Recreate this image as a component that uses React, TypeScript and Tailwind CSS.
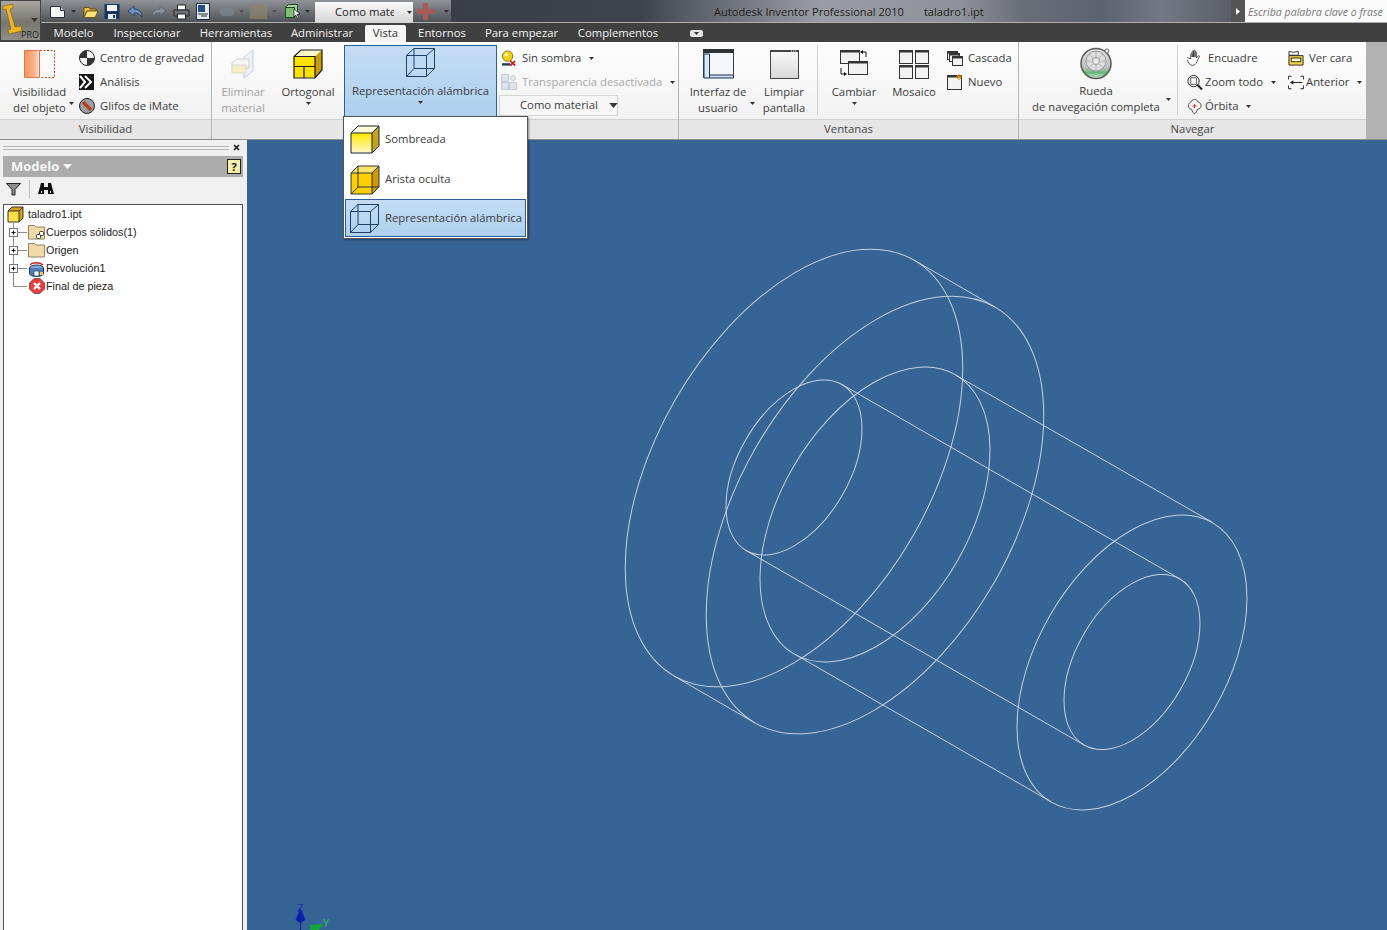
import type { ReactNode } from 'react';

const Caret = ({ className = '' }: { className?: string }) => (
  <svg width="5" height="3" viewBox="0 0 5 3" className={`shrink-0 ${className}`}>
    <path d="M0 0h5L2.5 3z" fill="#333" />
  </svg>
);

// ---- quick access icons
const NewIcon = () => (
  <svg width="17" height="16" viewBox="0 0 17 16">
    <path d="M1.500 2.500h10l4 4v7h-14z" fill="#f4f6f8" stroke="#23303c" />
    <path d="M11.500 2.500v4h4" fill="#c8d0d8" stroke="#23303c" />
  </svg>
);
const OpenIcon = () => (
  <svg width="16" height="16" viewBox="0 0 16 16">
    <path d="M1 3.500h5l1 1.500h6v2H4l-3 6z" fill="#f0c040" stroke="#5a4208" strokeWidth="0.8" />
    <path d="M4 7h11l-3 6.500H1z" fill="#fbe27a" stroke="#5a4208" strokeWidth="0.8" />
  </svg>
);
const SaveIcon = () => (
  <svg width="16" height="17" viewBox="0 0 16 17">
    <path d="M.5 1h15v15H.5z" fill="#16365e" />
    <path d="M3 2h10v6H3z" fill="#f2f5f8" />
    <path d="M4 11h8v5H4z" fill="#e6ecf2" />
    <path d="M9 12h2v3H9z" fill="#16365e" />
  </svg>
);
const UndoIcon = ({ dim = false }: { dim?: boolean }) => (
  <svg width="17" height="14" viewBox="0 0 17 14" className={dim ? 'opacity-30 -scale-x-100' : ''}>
    <path d="M7 1L1 6l6 5V8c3 0 6 .5 8 4 .3-5-3-8-8-8z" fill={dim ? '#c4ccd6' : '#6f93bd'} stroke="#20406a" strokeWidth="0.9" />
  </svg>
);
const PrintIcon = () => (
  <svg width="17" height="16" viewBox="0 0 17 16">
    <path d="M4.500 1h8v5h-8z" fill="#fff" stroke="#222" />
    <path d="M1 6h15v6H1z" fill="#6d7276" stroke="#222" />
    <path d="M4.500 10h8v5h-8z" fill="#fff" stroke="#222" />
  </svg>
);
const DocIcon = () => (
  <svg width="14" height="17" viewBox="0 0 14 17">
    <path d="M.5.500h13v16H.5z" fill="#e8eaec" stroke="#1b2d40" />
    <path d="M2 2h7v7H2z" fill="#24507f" />
    <path d="M2 11h10M5 13h6" stroke="#1b2d40" />
  </svg>
);
const CursorBoxIcon = () => (
  <svg width="18" height="19" viewBox="0 0 18 19">
    <path d="M1.500 5.500l3-3h9v10h-12z" fill="#a8d49a" stroke="#24432a" />
    <path d="M1.500 5.500h9v10h-9z" fill="#7fbf6f" stroke="#24432a" />
    <path d="M10 7l6 5-3 .3 2 3.500-1.500 .7-1.800-3.500L10 15z" fill="#fff" stroke="#111" strokeWidth="0.7" />
  </svg>
);
const RedPlusIcon = () => (
  <svg width="17" height="17" viewBox="0 0 17 17">
    <path d="M6 0h5v6h6v5h-6v6H6v-6H0V6h6z" fill="#a85a58" />
  </svg>
);

// ---- ribbon icons
const VisibilityIcon = () => (
  <svg width="31" height="29" viewBox="0 0 31 29">
    <defs>
      <linearGradient id="vis" x1="0" x2="1" y1="0" y2="0">
        <stop offset="0" stopColor="#f3955f" />
        <stop offset="0.65" stopColor="#f9b48c" />
        <stop offset="1" stopColor="#fde6d8" />
      </linearGradient>
    </defs>
    <path d="M.5.500h15v27H.5z" fill="url(#vis)" stroke="#d9764a" />
    <path d="M16 .5h14.500v27H16" fill="none" stroke="#b3552c" strokeDasharray="2 1.500" />
  </svg>
);
const GravityIcon = () => (
  <svg width="16" height="16" viewBox="0 0 16 16">
    <circle cx="8" cy="8" r="7.500" fill="#f4f4f4" stroke="#222" />
    <path d="M8 8V.5A7.500 7.500 0 0 0 .5 8zM8 8v7.500A7.500 7.500 0 0 0 15.500 8z" fill="#333" />
  </svg>
);
const AnalysisIcon = () => (
  <svg width="16" height="16" viewBox="0 0 16 16">
    <path d="M0 0h15v16H0z" fill="#151515" />
    <path d="M1 2l5 6-5 6M6 2l6 6-6 6" fill="none" stroke="#fff" strokeWidth="2" />
  </svg>
);
const ImateIcon = () => (
  <svg width="16" height="16" viewBox="0 0 16 16">
    <circle cx="8" cy="8" r="7.500" fill="#9a9fa5" stroke="#222" />
    <path d="M4 4l8 8" stroke="#b8401c" strokeWidth="3.500" />
  </svg>
);
const RemoveMaterialIcon = () => (
  <svg width="24" height="30" viewBox="0 0 24 30">
    <path d="M13 8l9-7v21l-9 7z" fill="#eef2f8" stroke="#c4d0e2" />
    <path d="M1 14l5-4h12v9H1z" fill="#f5f5f5" stroke="#cfcfcf" />
    <path d="M1 16h14v8H1z" fill="#f6efc4" stroke="#d8d8d8" />
  </svg>
);
const OrthoIcon = () => (
  <svg width="30" height="30" viewBox="0 0 30 30">
    <path d="M1 7.500l7-6.500h21v20l-7 7.500z" fill="#c69a08" />
    <path d="M1 7.500l7-6.500h21l-7 6.500z" fill="#fff7cc" />
    <path d="M1 7.500h21v21H1z" fill="#ffe100" />
    <path d="M1 7.500l7-6.500h21v20l-7 8H1zM1 7.500h21v21M11 28.500v-11h11M1 17.500h10" fill="none" stroke="#1d1d1d" strokeWidth="1.200" />
  </svg>
);
const WireIcon = ({ color = '#1c3f66' }: { color?: string }) => (
  <svg width="29" height="29" viewBox="0 0 29 29" className="shrink-0">
    <path d="M.5 7.500h20v21H.5zM8 .5h20.500v20H8zM.5 7.500L8 .5M20.500 7.500L28.500 .5M.5 28.500L8 20.500M20.500 28.500l8-8" fill="none" stroke={color} />
  </svg>
);
const ShadedIcon = () => (
  <svg width="30" height="29" viewBox="0 0 30 29" className="shrink-0">
    <defs>
      <linearGradient id="shade" x1="0" x2="0" y1="0" y2="1">
        <stop offset="0" stopColor="#ffe600" />
        <stop offset="1" stopColor="#fff9c8" />
      </linearGradient>
    </defs>
    <path d="M1 8L8 1h21v20l-7 7z" fill="#c8a218" />
    <path d="M1 8L8 1h21l-7 7z" fill="#fffbd8" />
    <path d="M1 8h21v20H1z" fill="url(#shade)" />
    <path d="M1 8L8 1h21v20l-7 7H1zM1 8h21v20M22 8l7-7" fill="none" stroke="#13263a" />
  </svg>
);
const HiddenEdgeIcon = () => (
  <svg width="30" height="31" viewBox="0 0 30 31" className="shrink-0">
    <path d="M1 9l7-7h21v21l-7 7z" fill="#d09a00" />
    <path d="M1 9l7-7h21l-7 7z" fill="#ffe36a" />
    <path d="M1 9h21v21H1z" fill="#ffcf00" />
    <path d="M1 9l7-7h21v21l-7 7H1zM1 9h21v21M22 9l7-7M8 2v21h21M8 23l-7 7" fill="none" stroke="#13263a" strokeWidth="0.9" />
  </svg>
);
const NoShadowIcon = () => (
  <svg width="17" height="17" viewBox="0 0 17 17">
    <circle cx="7" cy="6" r="5.500" fill="#f3d21c" stroke="#8a7408" />
    <circle cx="5.500" cy="4.500" r="1.800" fill="#fff6b0" />
    <path d="M1 13.500h9v2.500H1z" fill="#23364e" />
    <path d="M10 11l5 5M15 11l-5 5" stroke="#c81e1e" strokeWidth="1.800" />
  </svg>
);
const TransparencyIcon = () => (
  <svg width="16" height="16" viewBox="0 0 16 16">
    <path d="M.5.500h7v7h-7zM.5 8.500h7v7h-7zM8.500 8.500h7v7h-7z" fill="#dde3ea" stroke="#c3ccd6" />
    <circle cx="12" cy="4" r="2.500" fill="#e8ecf0" stroke="#c3ccd6" />
  </svg>
);
const UiIcon = () => (
  <svg width="31" height="30" viewBox="0 0 31 30">
    <path d="M.5.500h30v28H.5z" fill="#f4f6f8" stroke="#3a3f46" />
    <path d="M0 0h31v4H0z" fill="#2f3338" />
    <path d="M1 5h5.500v24H1z" fill="#dce8f4" stroke="#16365e" />
    <path d="M6.500 26h24v3h-24z" fill="#d0dded" stroke="#16365e" />
  </svg>
);
const CleanIcon = () => (
  <svg width="29" height="29" viewBox="0 0 29 29">
    <defs>
      <linearGradient id="clean" x1="0" x2="0" y1="0" y2="1">
        <stop offset="0" stopColor="#fafafa" />
        <stop offset="1" stopColor="#d8d8d8" />
      </linearGradient>
    </defs>
    <path d="M.5.500h28v28H.5z" fill="url(#clean)" stroke="#444" />
    <path d="M0 0h29v2H0z" fill="#444" />
    <path d="M21 1h1M23 1h1M25 1h1" stroke="#fff" />
  </svg>
);
const Win = ({ x, y, w, h }: { x: number; y: number; w: number; h: number }) => (
  <g>
    <rect x={x + 0.5} y={y + 0.5} width={w} height={h} fill="#f2f2f2" stroke="#333" />
    <rect x={x} y={y} width={w + 1} height={2.5} fill="#333" />
  </g>
);
const SwitchIcon = () => (
  <svg width="31" height="30" viewBox="0 0 31 30">
    <Win x={1} y={1} w={19} h={13} />
    <Win x={9} y={12} w={19} h={13} />
    <path d="M27 8V3h-4" fill="none" stroke="#111" />
    <path d="M24 1l-3 2 3 2z" fill="#111" />
    <path d="M2 19v6h3" fill="none" stroke="#111" />
    <path d="M5 23l3 2-3 2z" fill="#111" />
  </svg>
);
const TileIcon = () => (
  <svg width="30" height="29" viewBox="0 0 30 29">
    <Win x={0} y={0} w={13} h={13} />
    <Win x={16} y={0} w={13} h={13} />
    <Win x={0} y={15} w={13} h={13} />
    <Win x={16} y={15} w={13} h={13} />
  </svg>
);
const CascadeIcon = () => (
  <svg width="16" height="15" viewBox="0 0 16 15">
    <Win x={0} y={0} w={10} h={8} />
    <Win x={2} y={2} w={10} h={8} />
    <Win x={5} y={5} w={10} h={9} />
  </svg>
);
const NewWinIcon = () => (
  <svg width="16" height="16" viewBox="0 0 16 16">
    <Win x={0} y={1} w={14} h={14} />
    <path d="M12 0v6M9 3h6M10 1l4 4M14 1l-4 4" stroke="#e98a16" />
  </svg>
);
const WheelIcon = () => (
  <svg width="32" height="33" viewBox="0 0 32 33">
    <defs>
      <linearGradient id="wheel" x1="0" x2="0" y1="0" y2="1">
        <stop offset="0" stopColor="#e4e4e4" />
        <stop offset="0.65" stopColor="#bdbdbd" />
        <stop offset="0.8" stopColor="#66b97c" />
        <stop offset="1" stopColor="#c9e6d0" />
      </linearGradient>
    </defs>
    <circle cx="16" cy="16.500" r="15" fill="url(#wheel)" stroke="#5a5a5a" strokeWidth="1.500" />
    <circle cx="16" cy="14" r="10" fill="#dcdcdc" stroke="#9a9a9a" />
    <path d="M16 4v20M6 14h20M9 7l14 14M23 7L9 21" stroke="#a8a8a8" strokeWidth="0.700" />
    <circle cx="16" cy="14" r="3.500" fill="#e8e8e8" stroke="#9a9a9a" />
    <circle cx="27" cy="4" r="2" fill="#fff" stroke="#666" />
  </svg>
);
const HandIcon = () => (
  <svg width="17" height="18" viewBox="0 0 17 18">
    <path d="M4 10V5c0-1.200 1.500-1.200 1.500 0v3-5.500c0-1.200 1.500-1.200 1.500 0V8V1.500c0-1.200 1.500-1.200 1.500 0V8V3c0-1.200 1.500-1.200 1.500 0v6l1.800-2.200c.8-.8 1.900 0 1.300 1l-2.800 5.500c-1 2.200-2.200 3.500-4.300 3.500-3 0-4-2-5-4l-1.700-3.300c-.5-1 .8-1.600 1.500-.8z" fill="#fff" stroke="#222" strokeWidth="0.800" />
  </svg>
);
const FaceIcon = () => (
  <svg width="17" height="16" viewBox="0 0 17 16">
    <path d="M1 1l5 1 5-1v4H1z" fill="none" stroke="#333" />
    <path d="M1 5.500h15v10H1z" fill="#f4d84a" stroke="#222" />
    <path d="M3.500 8h10v4h-10z" fill="#fff8c8" stroke="#222" />
  </svg>
);
const ZoomAllIcon = () => (
  <svg width="17" height="17" viewBox="0 0 17 17">
    <circle cx="7" cy="7" r="6" fill="#f2f2f2" stroke="#222" />
    <path d="M4 3.500h6v7H4z" fill="#fff" stroke="#333" strokeWidth="0.800" />
    <path d="M11 11l5 5" stroke="#222" strokeWidth="2.200" />
  </svg>
);
const PreviousIcon = () => (
  <svg width="18" height="15" viewBox="0 0 18 15">
    <path d="M.5 4V.5H4M14 .5h3.500V4M.5 11v3.500H4M14 14.500h3.500V11" fill="none" stroke="#111" />
    <path d="M3 7.500h13" stroke="#111" />
    <path d="M6 5v5L2.500 7.500z" fill="#111" />
  </svg>
);
const OrbitIcon = () => (
  <svg width="17" height="17" viewBox="0 0 17 17">
    <path d="M8 1c2 0 3 1 3.500 2.500C13.500 4 15 5.500 15 8c0 2-2 3-4 3.500C10.500 14 9 16 8 16s-2.500-2-3-4.500C3 11 1.500 10 1.500 8 1.500 5.500 3 4 4.500 3.500 5 2 6 1 8 1z" fill="none" stroke="#222" strokeWidth="0.800" />
    <path d="M6 8h4M8 6v4" stroke="#c81e1e" />
  </svg>
);

// ---- tree icons
const PartIcon = () => (
  <svg width="17" height="17" viewBox="0 0 17 17">
    <path d="M1 5l4-4h11v11l-4 4z" fill="#d8a010" />
    <path d="M1 5h11v11H1z" fill="#ffe04a" />
    <path d="M1 5l4-4h11v11l-4 4H1zM1 5h11v11M12 5l4-4" fill="none" stroke="#222" strokeWidth="0.900" />
  </svg>
);
const FolderIcon = ({ link = false }: { link?: boolean }) => (
  <svg width="17" height="16" viewBox="0 0 17 16">
    <path d="M.5 3V1.500h6L8 3h8.500v12H.5z" fill="#f2d9a8" stroke="#8f8468" />
    {link && (
      <g fill="#fff" stroke="#333">
        <rect x="11.500" y="7.500" width="4" height="4" rx="1" />
        <rect x="8.500" y="10.500" width="4" height="4" rx="1" />
      </g>
    )}
  </svg>
);
const RevolveIcon = () => (
  <svg width="17" height="17" viewBox="0 0 17 17">
    <path d="M2 5c2-3 10-3 13 0" fill="none" stroke="#c81e1e" strokeWidth="1.300" />
    <ellipse cx="8.500" cy="8" rx="7" ry="3" fill="#7fa6cf" stroke="#163a66" />
    <path d="M1.500 8v5.500c0 2 4 3 7 3s7-1 7-3V8" fill="#4f7fb2" stroke="#163a66" />
    <path d="M6 11h5v5H6z" fill="#fff" stroke="#163a66" strokeWidth="0.700" />
    <path d="M12 12h3v3h-3z" fill="#f1d14a" />
  </svg>
);
const EndIcon = () => (
  <svg width="16" height="16" viewBox="0 0 16 16">
    <path d="M5 .5h6L15.500 5v6L11 15.500H5L.5 11V5z" fill="#e43c3c" stroke="#7a5a5a" />
    <path d="M5 5l6 6M11 5l-6 6" stroke="#fff" strokeWidth="2.400" />
  </svg>
);

const SmallItem = ({ icon, label, caret, dim, gap = 'ml-[5px]' }: { icon: ReactNode; label: string; caret?: boolean; dim?: boolean; gap?: string }) => (
  <div className="flex h-[24px] items-center whitespace-nowrap">
    <span className="flex w-[16px] justify-center">{icon}</span>
    <span className={`${gap} ${dim ? 'text-[#a8a8a8]' : ''}`}>{label}</span>
    {caret && <Caret className="ml-[8px]" />}
  </div>
);

const LargeButton = ({ icon, lines, width, caret }: { icon: ReactNode; lines: string[]; width: string; caret?: boolean }) => (
  <div className={`${width} flex shrink-0 flex-col items-center pt-[4px]`}>
    <div className="flex h-[38px] items-center justify-center pb-[2px]">{icon}</div>
    {lines.map((line) => (
      <span key={line} className="whitespace-nowrap leading-[16px]">{line}</span>
    ))}
    {caret && <Caret className="mt-[2px]" />}
  </div>
);

const Panel = ({ width, label, children }: { width: string; label: string; children: ReactNode }) => (
  <section className={`${width} flex h-full shrink-0 flex-col border-r border-[#b4b4b4]`}>
    <div className="flex h-[77px]">{children}</div>
    <div className="flex h-[20px] items-center justify-center border-t border-[#cfcfcf] bg-[#e6e6e6] text-[#444]">{label}</div>
  </section>
);

const TreeRow = ({ kind, icon, label }: { kind: 'plus' | 'last'; icon: ReactNode; label: string }) => (
  <div className="flex h-[18px] items-center">
    <svg width="24" height="18" viewBox="0 0 24 18">
      <path d={kind === 'plus' ? 'M9.500 0v18M9.500 9.500H23' : 'M9.500 0v9.500H23'} stroke="#8a8a8a" fill="none" />
      {kind === 'plus' && (
        <>
          <rect x="5.500" y="5.500" width="8" height="8" fill="#fff" stroke="#777" />
          <path d="M7.500 9.500h4M9.500 7.500v4" stroke="#111" />
        </>
      )}
    </svg>
    <span className="flex w-[17px] justify-center">{icon}</span>
    <span className="ml-[1px]">{label}</span>
  </div>
);

const tabs = [
  { label: 'Modelo', w: 'w-[61px]' },
  { label: 'Inspeccionar', w: 'w-[86px]' },
  { label: 'Herramientas', w: 'w-[92px]' },
  { label: 'Administrar', w: 'w-[80px]' },
];
const tabsAfter = [
  { label: 'Entornos', w: 'w-[72px]' },
  { label: 'Para empezar', w: 'w-[87px]' },
  { label: 'Complementos', w: 'w-[106px]' },
];

const cyl = { a: 240, b: 137 };
const mid = { a: 161.3, b: 94.6 };
const hole = { a: 95.8, b: 55.7 };
const ellipses = [
  { cx: 794, cy: 468, ...cyl },
  { cx: 875, cy: 515, ...cyl },
  { cx: 875, cy: 514.5, ...mid },
  { cx: 794, cy: 467.5, ...hole },
  { cx: 1132, cy: 662.5, ...mid },
  { cx: 1132, cy: 662, ...hole },
];
const segments = [
  'M914 260L995 307',
  'M674 676L755 723',
  'M955.600 375L1212.600 522.500',
  'M794.400 654L1051.400 802',
  'M842 384.500L1180 579',
  'M746 550.500L1084 745',
];

export default function App() {
  return (
    <div className="relative flex h-[930px] w-[1387px] flex-col overflow-hidden bg-[#366495] font-['Open_Sans','Noto_Sans',sans-serif] text-[11.3px] text-[#3b3b3b]">
      {/* Title bar and tabs */}
      <header className="flex h-[42px] shrink-0 bg-[#404040]">
        <div className="h-[41px] w-[41px] shrink-0 border border-[#444] bg-[linear-gradient(180deg,#a8a8a0,#77776f_55%,#8f8f87)]">
          <div className="relative h-full">
            <svg width="26" height="36" viewBox="0 0 26 36" className="absolute left-0 top-0">
              <path d="M2 5l10-2v4L9 8l5 18 6-1 1 5-13 3-1-4 3-1L5 8 2 9z" fill="#e8b628" stroke="#8a6410" strokeWidth="0.700" />
            </svg>
            <Caret className="absolute right-[2px] top-[17px] h-[4px] w-[7px]" />
            <span className="absolute bottom-0 right-[1px] text-[9px] leading-[11px] text-[#222]">PRO</span>
          </div>
        </div>
        <div className="flex min-w-0 flex-1 flex-col">
          <div className="flex h-[23px] border-b border-[#aeaeae] bg-[linear-gradient(90deg,#4c4f55_0px,#3a3e46_420px,#3f434b_600px,#6a6e76_680px,#9a9da3_780px,#8f9298_920px,#6a6e78_980px,#5d6270_1060px,#747884_1120px,#5a5e68_1190px,#4b4e55_1346px)]">
            <div className="flex w-[410px] items-center bg-[linear-gradient(180deg,#8f9397,#505458)] pl-[8px] pt-[1px]">
              <NewIcon />
              <Caret className="ml-[5px]" />
              <span className="ml-[7px] flex"><OpenIcon /></span>
              <span className="ml-[5px] flex"><SaveIcon /></span>
              <span className="ml-[7px] flex"><UndoIcon /></span>
              <span className="ml-[6px] flex"><UndoIcon dim /></span>
              <span className="ml-[6px] flex"><PrintIcon /></span>
              <span className="ml-[6px] flex"><DocIcon /></span>
              <span className="ml-[10px] h-[8px] w-[14px] rounded-full bg-[#7f8a96] opacity-60" />
              <Caret className="ml-[5px] opacity-50" />
              <span className="ml-[6px] h-[14px] w-[17px] bg-[#8c8468] opacity-70" />
              <Caret className="ml-[5px] opacity-50" />
              <span className="ml-[7px] flex"><CursorBoxIcon /></span>
              <Caret className="ml-[3px]" />
              <div className="ml-[5px] mt-[1px] flex h-[21px] w-[98px] shrink-0 items-center overflow-hidden bg-[linear-gradient(180deg,#fafafa,#d4d4d4)] pl-[20px] pt-[1px] text-[#222]">
                <span className="w-[59px] overflow-hidden whitespace-nowrap">Como material</span>
                <Caret className="ml-[13px]" />
              </div>
              <span className="ml-[4px] flex"><RedPlusIcon /></span>
              <Caret className="ml-[10px]" />
            </div>
            <span className="ml-[263px] self-center whitespace-nowrap pt-[3px] text-[11.1px] text-[#222]">Autodesk Inventor Professional 2010</span>
            <span className="ml-[20px] self-center whitespace-nowrap pt-[3px] text-[11.1px] text-[#222]">taladro1.ipt</span>
            <div className="ml-auto flex h-[22px] w-[156px] shrink-0 items-stretch">
              <div className="flex w-[14px] items-center justify-center bg-[#555]">
                <svg width="4" height="7" viewBox="0 0 4 7"><path d="M0 0l4 3.500L0 7z" fill="#fff" /></svg>
              </div>
              <div className="flex flex-1 items-center whitespace-nowrap bg-[#fafafa] pl-[3px] pt-[4px] text-[10.6px] italic text-[#777]">Escriba palabra clave o frase</div>
            </div>
          </div>
          <nav className="flex h-[19px] items-end pl-[2px] text-[#f4f4f4]">
            {tabs.map((t) => (
              <span key={t.label} className={`${t.w} flex h-[17px] items-center justify-center whitespace-nowrap`}>{t.label}</span>
            ))}
            <span className="ml-[3px] flex h-[17px] w-[41px] items-center justify-center rounded-t-[2px] bg-[#f6f6f6] text-[#333]">Vista</span>
            {tabsAfter.map((t) => (
              <span key={t.label} className={`${t.w} flex h-[17px] items-center justify-center whitespace-nowrap`}>{t.label}</span>
            ))}
            <span className="mb-[5px] ml-[19px] flex h-[7px] w-[13px] items-center justify-center rounded-[2px] bg-[#e4e4e4]">
              <svg width="5" height="3" viewBox="0 0 5 3"><path d="M0 0h5L2.500 3z" fill="#333" /></svg>
            </span>
          </nav>
        </div>
      </header>

      {/* Ribbon */}
      <div className="flex h-[98px] shrink-0 border-b border-[#8f8f8f] bg-[linear-gradient(180deg,#fdfdfd,#efefef)]">
        <Panel width="w-[212px]" label="Visibilidad">
          <div className="relative">
            <LargeButton icon={<VisibilityIcon />} lines={['Visibilidad', 'del objeto']} width="w-[79px]" />
            <Caret className="absolute left-[69px] top-[60px]" />
          </div>
          <div className="pt-[4px]">
            <SmallItem icon={<GravityIcon />} label="Centro de gravedad" />
            <SmallItem icon={<AnalysisIcon />} label="Análisis" />
            <SmallItem icon={<ImateIcon />} label="Glifos de iMate" />
          </div>
        </Panel>
        <Panel width="w-[467px]" label="">
          <div className="ml-[9px] text-[#a0a0a0]">
            <LargeButton icon={<RemoveMaterialIcon />} lines={['Eliminar', 'material']} width="w-[44px]" />
          </div>
          <div className="ml-[14px]">
            <LargeButton icon={<OrthoIcon />} lines={['Ortogonal']} width="w-[58px]" caret />
          </div>
          <div className="ml-[7px] mt-[3px] flex h-[73px] w-[153px] shrink-0 flex-col items-center border border-[#2b5f9a] bg-[linear-gradient(180deg,#c4dcf3,#aed0ee)] pt-[2px]">
            <div className="h-[35px]"><WireIcon /></div>
            <span className="whitespace-nowrap leading-[16px]">Representación alámbrica</span>
            <Caret className="mt-[2px]" />
          </div>
          <div className="ml-[4px] pt-[4px]">
            <SmallItem icon={<NoShadowIcon />} label="Sin sombra" caret />
            <SmallItem icon={<TransparencyIcon />} label="Transparencia desactivada" caret dim />
            <div className="-ml-[2px] mt-px flex h-[21px] w-[119px] items-center border border-[#d4d4d4] bg-[#f7f7f7] pl-[20px]">
              <span className="whitespace-nowrap">Como material</span>
              <Caret className="ml-[11px] h-[5px] w-[9px]" />
            </div>
          </div>
        </Panel>
        <Panel width="w-[340px]" label="Ventanas">
          <div className="relative ml-[10px]">
            <LargeButton icon={<UiIcon />} lines={['Interfaz de', 'usuario']} width="w-[58px]" />
            <Caret className="absolute left-[61px] top-[60px]" />
          </div>
          <div className="ml-[12px]">
            <LargeButton icon={<CleanIcon />} lines={['Limpiar', 'pantalla']} width="w-[50px]" />
          </div>
          <div className="ml-[8px] mt-[3px] h-[70px] w-px bg-[#d0d0d0]" />
          <div className="ml-[7px]">
            <LargeButton icon={<SwitchIcon />} lines={['Cambiar']} width="w-[58px]" caret />
          </div>
          <div className="ml-[4px]">
            <LargeButton icon={<TileIcon />} lines={['Mosaico']} width="w-[54px]" />
          </div>
          <div className="ml-[6px] pt-[4px]">
            <SmallItem icon={<CascadeIcon />} label="Cascada" />
            <SmallItem icon={<NewWinIcon />} label="Nuevo" />
          </div>
        </Panel>
        <Panel width="w-[348px]" label="Navegar">
          <div className="relative -mt-px ml-[6px] w-[142px]">
            <LargeButton icon={<WheelIcon />} lines={['Rueda', 'de navegación completa']} width="w-full" />
            <Caret className="absolute left-[141px] top-[57px]" />
          </div>
          <div className="ml-[10px] mt-[3px] h-[70px] w-px bg-[#d0d0d0]" />
          <div className="ml-[9px] w-[101px] pt-[4px]">
            <SmallItem icon={<HandIcon />} label="Encuadre" />
            <SmallItem icon={<ZoomAllIcon />} label="Zoom todo" caret gap="ml-[2px]" />
            <SmallItem icon={<OrbitIcon />} label="Órbita" caret gap="ml-[2px]" />
          </div>
          <div className="pt-[4px]">
            <SmallItem icon={<FaceIcon />} label="Ver cara" />
            <SmallItem icon={<PreviousIcon />} label="Anterior" caret gap="ml-[2px]" />
          </div>
        </Panel>
        <div className="flex-1 bg-[#b1b1b1]" />
      </div>

      {/* Body */}
      <div className="flex min-h-0 flex-1">
        <aside className="flex w-[247px] shrink-0 flex-col bg-[#f0f0f0] pl-[3px] pr-[4px]">
          <div className="flex h-[16px] items-center">
            <div className="h-[4px] flex-1 border-y border-[#b4b4b4]" />
            <svg width="14" height="8" viewBox="0 0 14 8"><path d="M5 1l5 5M10 1l-5 5" stroke="#111" strokeWidth="1.500" /></svg>
          </div>
          <div className="flex h-[21px] items-center bg-[#acacac] pl-[8px] pr-[2px]">
            <span className="text-[13px] font-bold text-[#f6f6f6]">Modelo</span>
            <svg width="9" height="5" viewBox="0 0 9 5" className="ml-[4px]"><path d="M0 0h9L4.500 5z" fill="#f6f6f6" /></svg>
            <span className="ml-auto flex h-[15px] w-[14px] items-center justify-center border border-[#222] bg-[#f7efb0] text-[11px] font-bold leading-none text-[#111]">?</span>
          </div>
          <div className="flex h-[27px] items-center pb-[3px] pl-[3px]">
            <svg width="15" height="13" viewBox="0 0 15 13"><path d="M.5.500h14L9 6.500V12H6V6.500z" fill="#8d8d8d" stroke="#222" /></svg>
            <span className="ml-[8px] h-[18px] w-px bg-[#bbb]" />
            <svg width="16" height="14" viewBox="0 0 16 14" className="ml-[8px]">
              <path d="M3 1h3v4h4V1h3l3 11h-6V8H6v4H0z" fill="#111" />
              <path d="M3 9h1v2H3zM12 9h1v2h-1z" fill="#fff" />
            </svg>
          </div>
          <div className="min-h-0 flex-1 border border-b-0 border-[#555] bg-white font-['Liberation_Sans',sans-serif] text-[10.8px] text-[#1c1c1c]">
            <div className="flex h-[18px] items-center pl-[3px]">
              <PartIcon />
              <span className="ml-[4px]">taladro1.ipt</span>
            </div>
            <TreeRow kind="plus" icon={<FolderIcon link />} label="Cuerpos sólidos(1)" />
            <TreeRow kind="plus" icon={<FolderIcon />} label="Origen" />
            <TreeRow kind="plus" icon={<RevolveIcon />} label="Revolución1" />
            <TreeRow kind="last" icon={<EndIcon />} label="Final de pieza" />
          </div>
        </aside>

        <main className="relative min-w-0 flex-1 bg-[#366495]">
          <svg width="1140" height="790" viewBox="247 140 1140 790" className="absolute inset-0">
            <g fill="none" stroke="#c3d1de" strokeWidth="1">
              {ellipses.map((e, i) => (
                <ellipse key={i} cx={e.cx} cy={e.cy} rx={e.a} ry={e.b} transform={`rotate(-60 ${e.cx} ${e.cy})`} />
              ))}
              {segments.map((d) => (
                <path key={d} d={d} />
              ))}
            </g>
            <path d="M300.500 930V911" stroke="#0a1fa8" />
            <path d="M300.500 908l-5 12 5 3 5-3z" fill="#0a1fa8" />
            <path d="M310 925l13-1-4 6h-9z" fill="#12a838" />
          </svg>
          <span className="absolute left-[50px] top-[762px] text-[11px] leading-none text-[#1c2fc0]">Z</span>
          <span className="absolute left-[76px] top-[777px] text-[11px] leading-none text-[#22c05a]">Y</span>
        </main>
      </div>

      {/* Dropdown */}
      <div className="absolute left-[343px] top-[116px] w-[185px] border border-[#555] bg-white p-px pt-[2px] shadow-[1px_1px_2px_rgba(0,0,0,0.4)]">
        <div className="flex h-[40px] items-center px-[5px]">
          <ShadedIcon />
          <span className="ml-[5px]">Sombreada</span>
        </div>
        <div className="flex h-[40px] items-center px-[5px]">
          <HiddenEdgeIcon />
          <span className="ml-[5px]">Arista oculta</span>
        </div>
        <div className="flex h-[38px] items-center border border-[#2b5f9a] bg-[linear-gradient(180deg,#c4dcf3,#aed0ee)] px-[4px]">
          <WireIcon />
          <span className="ml-[6px] whitespace-nowrap">Representación alámbrica</span>
        </div>
      </div>
    </div>
  );
}
